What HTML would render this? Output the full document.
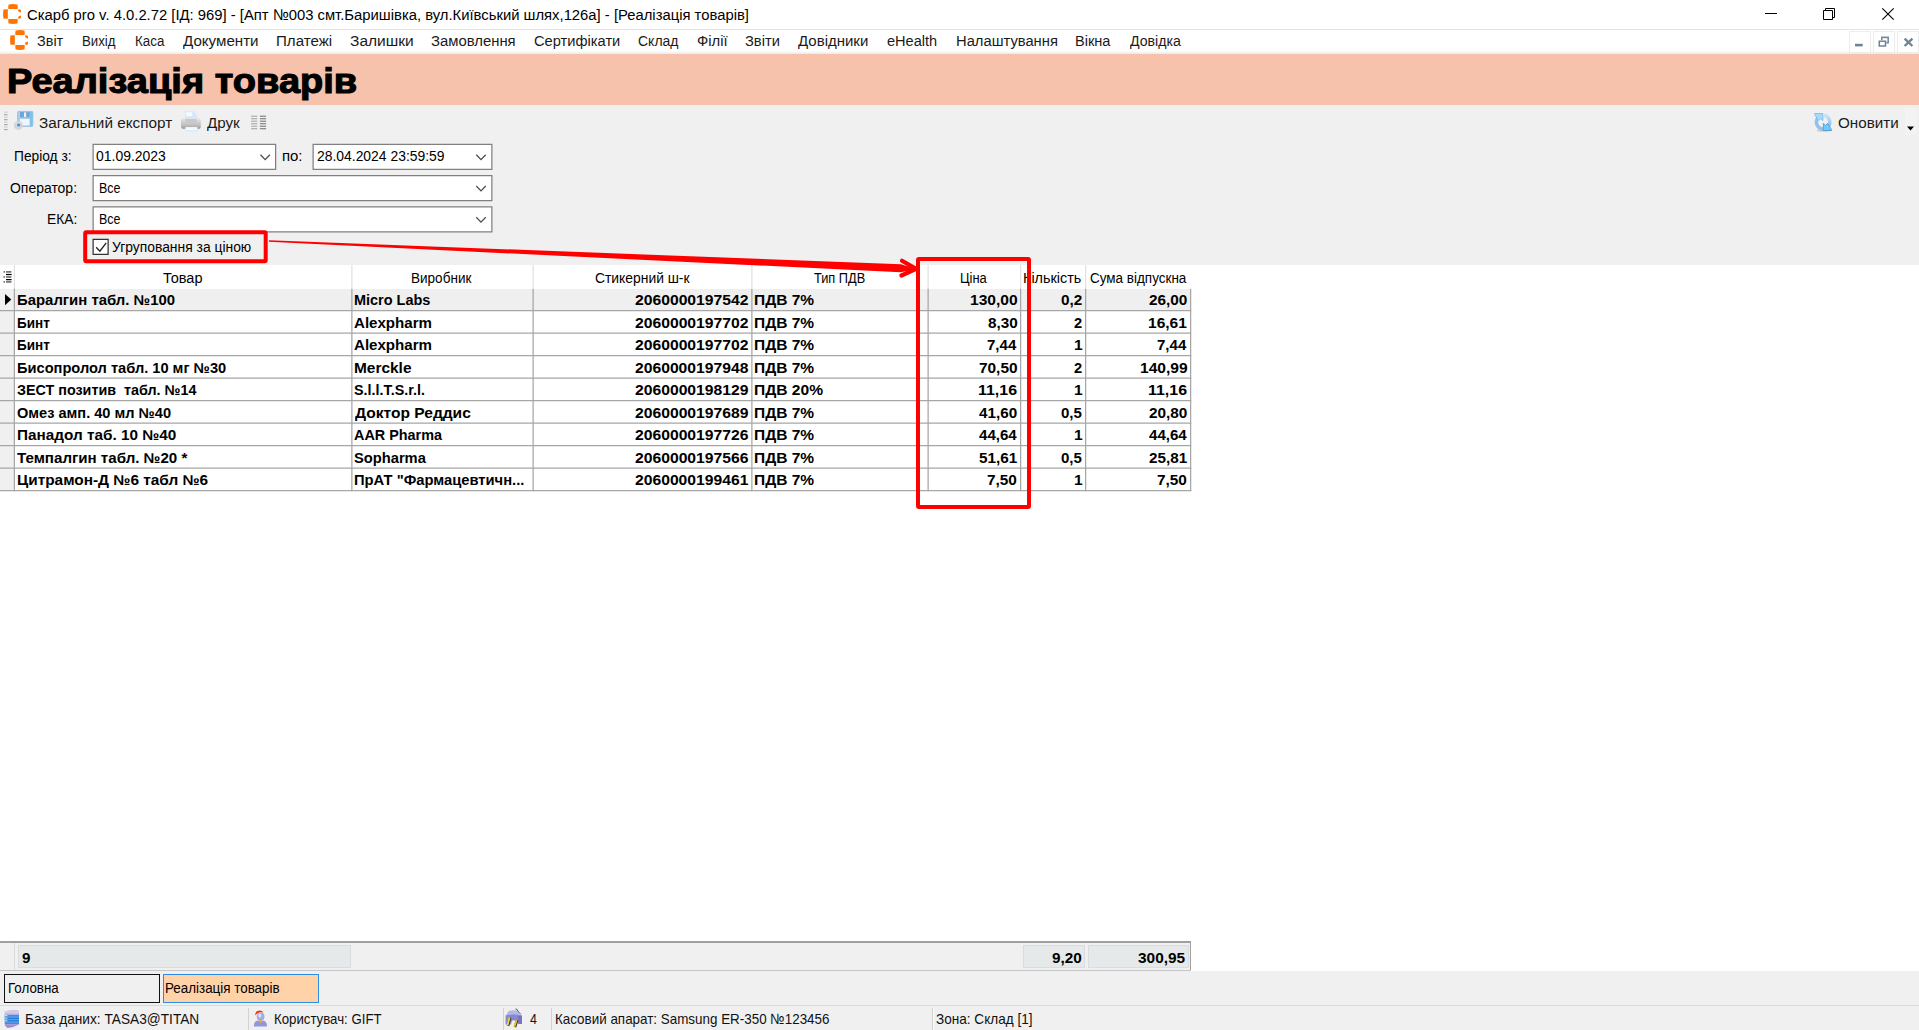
<!DOCTYPE html>
<html lang="uk"><head><meta charset="utf-8"><title>Скарб pro</title>
<style>
html,body{margin:0;padding:0;background:#fff;}
body{width:1919px;height:1030px;position:relative;overflow:hidden;font-family:'Liberation Sans',sans-serif;color:#000;}
.b{position:absolute;box-sizing:border-box;}
.t{position:absolute;white-space:pre;transform-origin:0 0;font-family:'Liberation Sans',sans-serif;}
svg{position:absolute;overflow:visible;}
</style></head><body>

<div class="b" style="left:0px;top:29px;width:1919px;height:1px;background:#e3e3e3;"></div>
<div class="b" style="left:0px;top:51px;width:1919px;height:3px;background:linear-gradient(#fff,#e9e9e9);"></div>
<div class="b" style="left:0px;top:54px;width:1919px;height:51px;background:#f6c2ac;"></div>
<div class="b" style="left:0px;top:105px;width:1919px;height:160px;background:#f0f0f0;"></div>
<svg style="left:0;top:0" width="1" height="1"><rect x="92.5" y="143.75" width="183.75" height="26.25" fill="#808080"/><rect x="93.75" y="145.0" width="181.25" height="23.75" fill="#fff"/><path d="M260.5 154.775 L265.2 159.67499999999998 L269.9 154.775" fill="none" stroke="#4a4a4a" stroke-width="1.25"/></svg>
<svg style="left:0;top:0" width="1" height="1"><rect x="312.5" y="143.75" width="180.0" height="26.25" fill="#808080"/><rect x="313.75" y="145.0" width="177.5" height="23.75" fill="#fff"/><path d="M476.3 154.775 L481 159.67499999999998 L485.7 154.775" fill="none" stroke="#4a4a4a" stroke-width="1.25"/></svg>
<svg style="left:0;top:0" width="1" height="1"><rect x="92.5" y="175" width="400.0" height="26.25" fill="#808080"/><rect x="93.75" y="176.25" width="397.5" height="23.75" fill="#fff"/><path d="M476.3 186.025 L481 190.92499999999998 L485.7 186.025" fill="none" stroke="#4a4a4a" stroke-width="1.25"/></svg>
<svg style="left:0;top:0" width="1" height="1"><rect x="92.5" y="206.25" width="400.0" height="26.25" fill="#808080"/><rect x="93.75" y="207.5" width="397.5" height="23.75" fill="#fff"/><path d="M476.3 217.275 L481 222.17499999999998 L485.7 217.275" fill="none" stroke="#4a4a4a" stroke-width="1.25"/></svg>
<svg style="left:0;top:0" width="1" height="1"><rect x="92.5" y="238.75" width="16.25" height="16.25" fill="#333"/><rect x="93.75" y="240" width="13.75" height="13.75" fill="#fff"/><path d="M96.2 247.3 L99.9 251.1 L106.2 242.8" fill="none" stroke="#222" stroke-width="1.35"/></svg>
<div class="b" style="left:0px;top:289px;width:15px;height:202px;background:#f0f0f0;"></div>
<div class="b" style="left:15px;top:289px;width:1176px;height:22px;background:#efefef;"></div>
<svg style="left:0;top:0" width="1" height="1">
<rect x="13.75" y="265" width="1.25" height="23.75" fill="#e2e2e2"/>
<rect x="351.25" y="265" width="1.25" height="23.75" fill="#e2e2e2"/>
<rect x="532.5" y="265" width="1.25" height="23.75" fill="#e2e2e2"/>
<rect x="751.25" y="265" width="1.25" height="23.75" fill="#e2e2e2"/>
<rect x="927.5" y="265" width="1.25" height="23.75" fill="#e2e2e2"/>
<rect x="1020.0" y="265" width="1.25" height="23.75" fill="#e2e2e2"/>
<rect x="1085.0" y="265" width="1.25" height="23.75" fill="#e2e2e2"/>
<rect x="0" y="310.0" width="1191.25" height="1.25" fill="#a6a6a6"/>
<rect x="0" y="332.5" width="1191.25" height="1.25" fill="#a6a6a6"/>
<rect x="0" y="355.0" width="1191.25" height="1.25" fill="#a6a6a6"/>
<rect x="0" y="377.5" width="1191.25" height="1.25" fill="#a6a6a6"/>
<rect x="0" y="400.0" width="1191.25" height="1.25" fill="#a6a6a6"/>
<rect x="0" y="422.5" width="1191.25" height="1.25" fill="#a6a6a6"/>
<rect x="0" y="445.0" width="1191.25" height="1.25" fill="#a6a6a6"/>
<rect x="0" y="467.5" width="1191.25" height="1.25" fill="#a6a6a6"/>
<rect x="0" y="490.0" width="1191.25" height="1.25" fill="#a6a6a6"/>
<rect x="13.75" y="288.75" width="1.25" height="202.5" fill="#a6a6a6"/>
<rect x="351.25" y="288.75" width="1.25" height="202.5" fill="#a6a6a6"/>
<rect x="532.5" y="288.75" width="1.25" height="202.5" fill="#a6a6a6"/>
<rect x="751.25" y="288.75" width="1.25" height="202.5" fill="#a6a6a6"/>
<rect x="927.5" y="288.75" width="1.25" height="202.5" fill="#a6a6a6"/>
<rect x="1020.0" y="288.75" width="1.25" height="202.5" fill="#a6a6a6"/>
<rect x="1085.0" y="288.75" width="1.25" height="202.5" fill="#a6a6a6"/>
<rect x="1190.0" y="288.75" width="1.25" height="202.5" fill="#a6a6a6"/>
</svg>
<svg style="left:0;top:0" width="1" height="1"><path d="M5 294 L11.3 299.6 L5 305.2 Z" fill="#000"/></svg>
<svg style="left:0;top:0" width="1" height="1">
<rect x="6" y="271.09999999999997" width="5.4" height="1.6" fill="#6a6a6a"/><rect x="3.5" y="271.2" width="1.4" height="1.4" fill="#444"/>
<rect x="6" y="273.9" width="5.6" height="1.25" fill="#000"/>
<rect x="6" y="276.2" width="5.4" height="1.6" fill="#6a6a6a"/><rect x="3.5" y="276.3" width="1.4" height="1.4" fill="#444"/>
<rect x="6" y="279.0" width="5.6" height="1.25" fill="#000"/>
<rect x="6" y="281.09999999999997" width="5.4" height="1.6" fill="#6a6a6a"/><rect x="3.5" y="281.2" width="1.4" height="1.4" fill="#444"/>
</svg>
<div class="b" style="left:0px;top:941px;width:1191px;height:2px;background:#a0a0a0;"></div>
<div class="b" style="left:0px;top:943px;width:1190px;height:27px;background:#f0f0f0;"></div>
<div class="b" style="left:1190px;top:941px;width:1px;height:30px;background:#a0a0a0;"></div>
<div class="b" style="left:0px;top:970px;width:1191px;height:1px;background:#c6c6c6;"></div>
<div class="b" style="left:14px;top:943px;width:1px;height:27px;background:#dcdcdc;"></div>
<div class="b" style="left:18px;top:945.4px;width:333px;height:22.8px;background:#e6e9ea;border:1px solid #dadddf;"></div>
<div class="b" style="left:1022.5px;top:945.4px;width:62.5px;height:22.8px;background:#e6e9ea;border:1px solid #dadddf;"></div>
<div class="b" style="left:1087.5px;top:945.4px;width:101.29999999999995px;height:22.8px;background:#e6e9ea;border:1px solid #dadddf;"></div>
<div class="b" style="left:0px;top:971px;width:1919px;height:59px;background:#f0f0f0;"></div>
<div class="b" style="left:0px;top:1005px;width:1919px;height:1px;background:#d9d9d9;"></div>
<div class="b" style="left:4px;top:974px;width:156px;height:28.5px;background:#f0f0f0;border:1.2px solid #111;"></div>
<div class="b" style="left:162.5px;top:974px;width:156.5px;height:28.5px;background:#ffd2a8;border:1.3px solid #2b8be6;"></div>
<div class="b" style="left:248px;top:1008px;width:1px;height:22px;background:#d2d2d2;"></div>
<div class="b" style="left:503px;top:1008px;width:1px;height:22px;background:#d2d2d2;"></div>
<div class="b" style="left:551px;top:1008px;width:1px;height:22px;background:#d2d2d2;"></div>
<div class="b" style="left:931.5px;top:1008px;width:1px;height:22px;background:#d2d2d2;"></div>
<div class="b" style="left:932.5px;top:1008px;width:1px;height:22px;background:#fafafa;"></div>
<svg style="left:0;top:0" width="1" height="1">
<path d="M1765 13.5 H1777" stroke="#000" stroke-width="1"/>
<path d="M1823.5 10.5 h9 v9 h-9 z M1825.5 10.5 v-2 h9 v9 h-2" fill="none" stroke="#000" stroke-width="1"/>
<path d="M1882.3 8.3 L1893.7 19.7 M1893.7 8.3 L1882.3 19.7" stroke="#000" stroke-width="1.1"/>
</svg>
<div class="b" style="left:1848.8px;top:30.8px;width:22px;height:22px;background:#fff;border:1px solid #ededed;"></div>
<div class="b" style="left:1872.8px;top:30.8px;width:22px;height:22px;background:#fff;border:1px solid #ededed;"></div>
<div class="b" style="left:1896.6px;top:30.8px;width:22px;height:22px;background:#fff;border:1px solid #ededed;"></div>
<svg style="left:0;top:0" width="1" height="1">
<rect x="1855" y="43.8" width="7.7" height="2.6" fill="#6e8297"/>
<path d="M1881.8 40 v-2.6 h6.4 v5.4 h-2" fill="none" stroke="#7a8ea3" stroke-width="1.6"/>
<rect x="1879.3" y="41.2" width="6.2" height="4.8" fill="#fff" stroke="#6e8297" stroke-width="1.5"/>
<path d="M1904.6 38.6 L1912.4 46 M1912.4 38.6 L1904.6 46" stroke="#6e8297" stroke-width="2.3"/>
</svg>
<svg style="left:2.9px;top:3.9px" width="20" height="22" viewBox="0 0 20 22">
<path d="M5.6 0.4 Q10 -0.3 14.4 0.4 Q15 2.6 14.6 5 H5.4 Q5 2.6 5.6 0.4Z" fill="#ff7400"/>
<path d="M5.6 19.6 Q10 20.3 14.4 19.6 Q15 17.4 14.6 15 H5.4 Q5 17.4 5.6 19.6Z" fill="#ff7400"/>
<path d="M0.4 5.6 Q2.4 5 4.8 5.3 V14.7 Q2.4 15 0.4 14.4 Q-0.3 10 0.4 5.6Z" fill="#ff7400"/>
<path d="M15.2 5.3 Q16.8 5.2 17.8 5.8 Q18.2 7.2 17.9 8.6 Q16.2 8.2 15.2 7.2Z" fill="#ff7400"/>
<path d="M15.2 14.7 Q16.8 14.8 17.8 14.2 Q18.2 12.8 17.9 11.4 Q16.2 11.8 15.2 12.8Z" fill="#ff7400"/>
</svg>
<svg style="left:9.6px;top:30.3px" width="20" height="22" viewBox="0 0 20 22">
<path d="M5.6 0.4 Q10 -0.3 14.4 0.4 Q15 2.6 14.6 5 H5.4 Q5 2.6 5.6 0.4Z" fill="#ff7400"/>
<path d="M5.6 19.6 Q10 20.3 14.4 19.6 Q15 17.4 14.6 15 H5.4 Q5 17.4 5.6 19.6Z" fill="#ff7400"/>
<path d="M0.4 5.6 Q2.4 5 4.8 5.3 V14.7 Q2.4 15 0.4 14.4 Q-0.3 10 0.4 5.6Z" fill="#ff7400"/>
<path d="M15.2 5.3 Q16.8 5.2 17.8 5.8 Q18.2 7.2 17.9 8.6 Q16.2 8.2 15.2 7.2Z" fill="#ff7400"/>
<path d="M15.2 14.7 Q16.8 14.8 17.8 14.2 Q18.2 12.8 17.9 11.4 Q16.2 11.8 15.2 12.8Z" fill="#ff7400"/>
</svg>
<svg style="left:0;top:0" width="1" height="1">
<rect x="4" y="111.60" width="3.6" height="1.2" fill="#cfcfcf"/>
<rect x="4" y="114.08" width="3.6" height="1.2" fill="#a8a8a8"/>
<rect x="4" y="116.56" width="3.6" height="1.2" fill="#cfcfcf"/>
<rect x="4" y="119.04" width="3.6" height="1.2" fill="#a8a8a8"/>
<rect x="4" y="121.52" width="3.6" height="1.2" fill="#cfcfcf"/>
<rect x="4" y="124.00" width="3.6" height="1.2" fill="#a8a8a8"/>
<rect x="4" y="126.48" width="3.6" height="1.2" fill="#cfcfcf"/>
<rect x="4" y="128.96" width="3.6" height="1.2" fill="#a8a8a8"/>
</svg>
<svg style="left:14px;top:110px" width="20" height="22" viewBox="0 0 20 22">
<rect x="3.6" y="1.4" width="15.2" height="15" rx="1" fill="#a9d0ea" stroke="#8fb7dd" stroke-width="0.8"/>
<rect x="15.6" y="2" width="3" height="14" fill="#7fc4e6"/>
<rect x="6" y="2" width="9.6" height="5.4" fill="#6fa6d6"/>
<rect x="10" y="2.4" width="2.2" height="4.6" fill="#f1f1f1"/>
<rect x="6" y="9" width="9.6" height="6.4" fill="#f4f4f4"/>
<circle cx="4.4" cy="15.4" r="4.5" fill="#d0d7de"/>
<circle cx="4.7" cy="15" r="1.6" fill="#4f8fc8"/>
</svg>
<svg style="left:180px;top:110px" width="22" height="22" viewBox="0 0 22 22">
<defs><linearGradient id="pg" x1="0" y1="0" x2="0" y2="1"><stop offset="0" stop-color="#e6e6e6"/><stop offset="0.75" stop-color="#b9b9b9"/><stop offset="1" stop-color="#8f8f8f"/></linearGradient></defs>
<path d="M5.2 1.2 h8 l4 4 v4 h-12z" fill="#d3e6fb"/>
<path d="M6.2 2.2 h6 v4 h-6z" fill="#f5faff"/>
<rect x="1" y="8.2" width="19.8" height="10.6" rx="2.6" fill="url(#pg)"/>
<rect x="5.4" y="9" width="11" height="4" fill="#c9c9c9"/>
<rect x="5.2" y="17.2" width="12.4" height="4.2" fill="#d7e8fb"/>
<rect x="6" y="17.2" width="10.8" height="3" fill="#f4f9ff"/>
</svg>
<svg style="left:0;top:0" width="1" height="1">
<rect x="251.1" y="115.60" width="6.2" height="1.3" fill="#b3b3b3"/>
<rect x="251.1" y="118.00" width="6.2" height="1.3" fill="#b3b3b3"/>
<rect x="251.1" y="120.60" width="6.2" height="1.3" fill="#b3b3b3"/>
<rect x="251.1" y="123.00" width="6.2" height="1.3" fill="#b3b3b3"/>
<rect x="251.1" y="125.60" width="6.2" height="1.3" fill="#b3b3b3"/>
<rect x="251.1" y="128.00" width="6.2" height="1.3" fill="#b3b3b3"/>
<rect x="259.9" y="115.60" width="6.2" height="1.3" fill="#8c8c8c"/>
<rect x="259.9" y="118.00" width="6.2" height="1.3" fill="#8c8c8c"/>
<rect x="259.9" y="120.60" width="6.2" height="1.3" fill="#8c8c8c"/>
<rect x="259.9" y="123.00" width="6.2" height="1.3" fill="#8c8c8c"/>
<rect x="259.9" y="125.60" width="6.2" height="1.3" fill="#8c8c8c"/>
<rect x="259.9" y="128.00" width="6.2" height="1.3" fill="#8c8c8c"/>
</svg>
<svg style="left:1813.5px;top:112.5px" width="19" height="19" viewBox="0 0 19 19">
<defs><linearGradient id="rg" x1="0" y1="0" x2="0" y2="1"><stop offset="0" stop-color="#cfe4f5"/><stop offset="1" stop-color="#7fbfee"/></linearGradient></defs>
<ellipse cx="9.6" cy="17.6" rx="7" ry="1.1" fill="#bdbdbd" opacity="0.75"/>
<path d="M9.2 15.8 A6.7 6.7 0 0 1 4.6 4.2" fill="none" stroke="#8fc3ee" stroke-width="3.5"/>
<path d="M0.4 0.5 H8.9 V7.6 L6.6 5.6 L4.6 7.6 L1.9 3.6Z" fill="#a6dafc" stroke="#7db8ea" stroke-width="0.8"/>
<path d="M9 2.2 A6.7 6.7 0 0 1 13.6 13.8" fill="none" stroke="url(#rg)" stroke-width="3.5"/>
<path d="M17.8 17.5 H9.3 V10.4 L11.6 12.4 L13.6 10.4 L16.3 14.4Z" fill="#6ccbfc" stroke="#4d92d2" stroke-width="0.8"/>
</svg>
<svg style="left:0;top:0" width="1" height="1"><path d="M1907 126.6 h7 l-3.5 3.8z" fill="#000"/></svg>
<div class="b" style="left:1904.5px;top:108px;width:12.5px;height:27px;background:#f3f3f3;"></div>
<svg style="left:0;top:0" width="1" height="1"><path d="M1907 126.6 h7 l-3.5 3.8z" fill="#000"/></svg>
<svg style="left:3.6px;top:1009.8px" width="16" height="19" viewBox="0 0 16 19">
<defs><linearGradient id="dbg" x1="0" y1="0" x2="0" y2="1">
<stop offset="0" stop-color="#b9b3e4"/><stop offset="0.1" stop-color="#d6d2f4"/><stop offset="0.24" stop-color="#b4b4d8"/>
<stop offset="0.27" stop-color="#3f93e6"/><stop offset="0.5" stop-color="#1f7adc"/><stop offset="0.74" stop-color="#3b86dc"/>
<stop offset="0.8" stop-color="#a49cd8"/><stop offset="1" stop-color="#8c84c4"/></linearGradient></defs>
<path d="M0.6 1.4 Q7 -0.4 14.4 0.6 L15 1.6 V14.4 Q9 17.6 3.6 18 L0.8 15.6Z" fill="url(#dbg)"/>
<path d="M0.8 7 H15 M0.8 9.6 H15 M0.8 12 H15" stroke="#9cc4f2" stroke-width="0.7" opacity="0.8"/>
<path d="M1 5.6 h2.4 M1 8.2 h2.4 M1 10.8 h2.4" stroke="#e6f0ff" stroke-width="0.9"/>
</svg>
<svg style="left:252.6px;top:1010px" width="15" height="17" viewBox="0 0 15 17">
<path d="M2.2 5.4 Q2 0.6 6.6 0.4 Q9.4 0.4 10.4 2.6 Q7 1.6 4.6 3.2 Q3.2 4.2 2.2 5.4Z" fill="#ee3010"/>
<ellipse cx="7.6" cy="6.6" rx="3.9" ry="4.2" fill="#a4a9e6"/>
<ellipse cx="6.8" cy="5.6" rx="1.6" ry="2" fill="#dfe2fa"/>
<path d="M0.8 16.6 Q0.6 11.2 5 10.6 L7.4 12.4 L9.8 10.6 Q14.2 11.2 14 16.6Z" fill="#8f96dc"/>
<path d="M5.6 10.2 L7.4 13.6 L9.2 10.2Z" fill="#e6a23a"/>
</svg>
<svg style="left:505.4px;top:1008.4px" width="18" height="20" viewBox="0 0 18 20">
<path d="M10.4 0.8 Q12.6 1.2 13 3.4 L15.6 6.4" fill="none" stroke="#6a6a78" stroke-width="1.1"/>
<path d="M0.8 7.4 L3.6 3 Q7.6 1.6 11.2 2.6 L16.8 7 V8.6 H0.8Z" fill="#b6b6e8"/>
<path d="M0.6 7.6 Q8 5.4 16.9 7.6 V16 H13.4 L11.6 12.6 H7 L6 16.4 H0.6Z" fill="#8688d4"/>
<path d="M12.8 8 H16.9 V16 H13.6Z" fill="#7476c4"/>
<path d="M5.2 9.4 L3 17.8" stroke="#3a3420" stroke-width="2.6"/>
<path d="M4.6 9.2 L2.4 17.4" stroke="#f2d23c" stroke-width="1.9"/>
<path d="M12.2 12 L10 19.2" stroke="#3a3420" stroke-width="2.6"/>
<path d="M11.6 11.8 L9.4 18.8" stroke="#f0c030" stroke-width="1.9"/>
</svg>
<span class="t" style="left:27.38px;top:7.00px;font:normal 15.5px/15.5px 'Liberation Sans',sans-serif;color:#000;transform:scaleX(0.9559)">Скарб pro v. 4.0.2.72 [ІД: 969] - [Апт №003 смт.Баришівка, вул.Київський шлях,126а] - [Реалізація товарів]</span>
<span class="t" style="left:37.37px;top:33.00px;font:normal 15.5px/15.5px 'Liberation Sans',sans-serif;color:#1a1a1a;transform:scaleX(0.9314)">Звіт</span>
<span class="t" style="left:81.87px;top:33.00px;font:normal 15.5px/15.5px 'Liberation Sans',sans-serif;color:#1a1a1a;transform:scaleX(0.8535)">Вихід</span>
<span class="t" style="left:134.56px;top:33.00px;font:normal 15.5px/15.5px 'Liberation Sans',sans-serif;color:#1a1a1a;transform:scaleX(0.8617)">Каса</span>
<span class="t" style="left:183.29px;top:33.00px;font:normal 15.5px/15.5px 'Liberation Sans',sans-serif;color:#1a1a1a;transform:scaleX(0.9762)">Документи</span>
<span class="t" style="left:276.42px;top:33.00px;font:normal 15.5px/15.5px 'Liberation Sans',sans-serif;color:#1a1a1a;transform:scaleX(0.9729)">Платежі</span>
<span class="t" style="left:349.78px;top:33.00px;font:normal 15.5px/15.5px 'Liberation Sans',sans-serif;color:#1a1a1a;transform:scaleX(1.0027)">Залишки</span>
<span class="t" style="left:431.14px;top:33.00px;font:normal 15.5px/15.5px 'Liberation Sans',sans-serif;color:#1a1a1a;transform:scaleX(0.9582)">Замовлення</span>
<span class="t" style="left:534.19px;top:33.00px;font:normal 15.5px/15.5px 'Liberation Sans',sans-serif;color:#1a1a1a;transform:scaleX(0.9462)">Сертифікати</span>
<span class="t" style="left:638.03px;top:33.00px;font:normal 15.5px/15.5px 'Liberation Sans',sans-serif;color:#1a1a1a;transform:scaleX(0.9026)">Склад</span>
<span class="t" style="left:696.63px;top:33.00px;font:normal 15.5px/15.5px 'Liberation Sans',sans-serif;color:#1a1a1a;transform:scaleX(0.9572)">Філії</span>
<span class="t" style="left:744.85px;top:33.00px;font:normal 15.5px/15.5px 'Liberation Sans',sans-serif;color:#1a1a1a;transform:scaleX(0.9472)">Звіти</span>
<span class="t" style="left:798.30px;top:33.00px;font:normal 15.5px/15.5px 'Liberation Sans',sans-serif;color:#1a1a1a;transform:scaleX(0.9674)">Довідники</span>
<span class="t" style="left:887.05px;top:33.00px;font:normal 15.5px/15.5px 'Liberation Sans',sans-serif;color:#1a1a1a;transform:scaleX(0.9390)">eHealth</span>
<span class="t" style="left:955.54px;top:33.00px;font:normal 15.5px/15.5px 'Liberation Sans',sans-serif;color:#1a1a1a;transform:scaleX(0.9510)">Налаштування</span>
<span class="t" style="left:1075.06px;top:33.00px;font:normal 15.5px/15.5px 'Liberation Sans',sans-serif;color:#1a1a1a;transform:scaleX(0.9391)">Вікна</span>
<span class="t" style="left:1129.51px;top:33.00px;font:normal 15.5px/15.5px 'Liberation Sans',sans-serif;color:#1a1a1a;transform:scaleX(0.9119)">Довідка</span>
<span class="t" style="left:6.68px;top:63.00px;font:bold 35px/35px 'Liberation Sans',sans-serif;color:#000;-webkit-text-stroke:1.1px #000;transform:scaleX(1.0864)">Реалізація товарів</span>
<span class="t" style="left:38.55px;top:115.00px;font:normal 15.5px/15.5px 'Liberation Sans',sans-serif;color:#1a1a1a;transform:scaleX(0.9874)">Загальний експорт</span>
<span class="t" style="left:206.79px;top:115.00px;font:normal 15.5px/15.5px 'Liberation Sans',sans-serif;color:#1a1a1a;transform:scaleX(0.9771)">Друк</span>
<span class="t" style="left:1837.95px;top:115.00px;font:normal 15.5px/15.5px 'Liberation Sans',sans-serif;color:#1a1a1a;transform:scaleX(0.9804)">Оновити</span>
<span class="t" style="left:14.40px;top:149.00px;font:normal 14px/14px 'Liberation Sans',sans-serif;color:#000;transform:scaleX(0.9818)">Період з:</span>
<span class="t" style="left:96.00px;top:149.00px;font:normal 14px/14px 'Liberation Sans',sans-serif;color:#000;transform:scaleX(0.9963)">01.09.2023</span>
<span class="t" style="left:281.61px;top:149.00px;font:normal 14px/14px 'Liberation Sans',sans-serif;color:#000;transform:scaleX(1.0655)">по:</span>
<span class="t" style="left:316.69px;top:149.00px;font:normal 14px/14px 'Liberation Sans',sans-serif;color:#000;transform:scaleX(0.9927)">28.04.2024 23:59:59</span>
<span class="t" style="left:10.21px;top:181.00px;font:normal 14px/14px 'Liberation Sans',sans-serif;color:#000;transform:scaleX(0.9965)">Оператор:</span>
<span class="t" style="left:99.09px;top:181.00px;font:normal 14px/14px 'Liberation Sans',sans-serif;color:#000;transform:scaleX(0.8908)">Все</span>
<span class="t" style="left:46.77px;top:212.00px;font:normal 14px/14px 'Liberation Sans',sans-serif;color:#000;transform:scaleX(0.9860)">ЕКА:</span>
<span class="t" style="left:99.09px;top:212.00px;font:normal 14px/14px 'Liberation Sans',sans-serif;color:#000;transform:scaleX(0.8908)">Все</span>
<span class="t" style="left:112.34px;top:240.00px;font:normal 14px/14px 'Liberation Sans',sans-serif;color:#000;transform:scaleX(0.9903)">Угруповання за ціною</span>
<span class="t" style="left:163.03px;top:271.00px;font:normal 14px/14px 'Liberation Sans',sans-serif;color:#000;transform:scaleX(1.0370)">Товар</span>
<span class="t" style="left:411.29px;top:271.00px;font:normal 14px/14px 'Liberation Sans',sans-serif;color:#000;transform:scaleX(0.9670)">Виробник</span>
<span class="t" style="left:594.66px;top:271.00px;font:normal 14px/14px 'Liberation Sans',sans-serif;color:#000;transform:scaleX(0.9903)">Стикерний ш-к</span>
<span class="t" style="left:814.47px;top:271.00px;font:normal 14px/14px 'Liberation Sans',sans-serif;color:#000;transform:scaleX(0.9121)">Тип ПДВ</span>
<span class="t" style="left:960.45px;top:271.00px;font:normal 14px/14px 'Liberation Sans',sans-serif;color:#000;transform:scaleX(0.9227)">Ціна</span>
<span class="t" style="left:1023.12px;top:271.00px;font:normal 14px/14px 'Liberation Sans',sans-serif;color:#000;transform:scaleX(1.0282)">Кількість</span>
<span class="t" style="left:1089.68px;top:271.00px;font:normal 14px/14px 'Liberation Sans',sans-serif;color:#000;transform:scaleX(0.9628)">Сума відпускна</span>
<span class="t" style="left:16.54px;top:293.00px;font:bold 14px/14px 'Liberation Sans',sans-serif;color:#000;transform:scaleX(1.0646)">Баралгин табл. №100</span>
<span class="t" style="left:353.87px;top:293.00px;font:bold 14px/14px 'Liberation Sans',sans-serif;color:#000;transform:scaleX(1.0328)">Micro Labs</span>
<span class="t" style="left:635.13px;top:293.00px;font:bold 14px/14px 'Liberation Sans',sans-serif;color:#000;transform:scaleX(1.1211)">2060000197542</span>
<span class="t" style="left:754.29px;top:293.00px;font:bold 14px/14px 'Liberation Sans',sans-serif;color:#000;transform:scaleX(1.1060)">ПДВ 7%</span>
<span class="t" style="left:969.70px;top:293.00px;font:bold 14px/14px 'Liberation Sans',sans-serif;color:#000;transform:scaleX(1.1130)">130,00</span>
<span class="t" style="left:1061.31px;top:293.00px;font:bold 14px/14px 'Liberation Sans',sans-serif;color:#000;transform:scaleX(1.0943)">0,2</span>
<span class="t" style="left:1148.87px;top:293.00px;font:bold 14px/14px 'Liberation Sans',sans-serif;color:#000;transform:scaleX(1.0956)">26,00</span>
<span class="t" style="left:16.65px;top:316.00px;font:bold 14px/14px 'Liberation Sans',sans-serif;color:#000;transform:scaleX(0.9672)">Бинт</span>
<span class="t" style="left:354.39px;top:316.00px;font:bold 14px/14px 'Liberation Sans',sans-serif;color:#000;transform:scaleX(1.0777)">Alexpharm</span>
<span class="t" style="left:635.13px;top:316.00px;font:bold 14px/14px 'Liberation Sans',sans-serif;color:#000;transform:scaleX(1.1211)">2060000197702</span>
<span class="t" style="left:754.29px;top:316.00px;font:bold 14px/14px 'Liberation Sans',sans-serif;color:#000;transform:scaleX(1.1060)">ПДВ 7%</span>
<span class="t" style="left:987.59px;top:316.00px;font:bold 14px/14px 'Liberation Sans',sans-serif;color:#000;transform:scaleX(1.0921)">8,30</span>
<span class="t" style="left:1074.35px;top:316.00px;font:bold 14px/14px 'Liberation Sans',sans-serif;color:#000;transform:scaleX(1.0428)">2</span>
<span class="t" style="left:1148.22px;top:316.00px;font:bold 14px/14px 'Liberation Sans',sans-serif;color:#000;transform:scaleX(1.1090)">16,61</span>
<span class="t" style="left:16.65px;top:338.00px;font:bold 14px/14px 'Liberation Sans',sans-serif;color:#000;transform:scaleX(0.9672)">Бинт</span>
<span class="t" style="left:354.39px;top:338.00px;font:bold 14px/14px 'Liberation Sans',sans-serif;color:#000;transform:scaleX(1.0777)">Alexpharm</span>
<span class="t" style="left:635.13px;top:338.00px;font:bold 14px/14px 'Liberation Sans',sans-serif;color:#000;transform:scaleX(1.1211)">2060000197702</span>
<span class="t" style="left:754.29px;top:338.00px;font:bold 14px/14px 'Liberation Sans',sans-serif;color:#000;transform:scaleX(1.1060)">ПДВ 7%</span>
<span class="t" style="left:987.46px;top:338.00px;font:bold 14px/14px 'Liberation Sans',sans-serif;color:#000;transform:scaleX(1.0733)">7,44</span>
<span class="t" style="left:1073.67px;top:338.00px;font:bold 14px/14px 'Liberation Sans',sans-serif;color:#000;transform:scaleX(1.1139)">1</span>
<span class="t" style="left:1157.36px;top:338.00px;font:bold 14px/14px 'Liberation Sans',sans-serif;color:#000;transform:scaleX(1.0733)">7,44</span>
<span class="t" style="left:16.56px;top:361.00px;font:bold 14px/14px 'Liberation Sans',sans-serif;color:#000;transform:scaleX(1.0445)">Бисопролол табл. 10 мг №30</span>
<span class="t" style="left:353.80px;top:361.00px;font:bold 14px/14px 'Liberation Sans',sans-serif;color:#000;transform:scaleX(1.1026)">Merckle</span>
<span class="t" style="left:635.13px;top:361.00px;font:bold 14px/14px 'Liberation Sans',sans-serif;color:#000;transform:scaleX(1.1204)">2060000197948</span>
<span class="t" style="left:754.29px;top:361.00px;font:bold 14px/14px 'Liberation Sans',sans-serif;color:#000;transform:scaleX(1.1060)">ПДВ 7%</span>
<span class="t" style="left:978.83px;top:361.00px;font:bold 14px/14px 'Liberation Sans',sans-serif;color:#000;transform:scaleX(1.0996)">70,50</span>
<span class="t" style="left:1074.35px;top:361.00px;font:bold 14px/14px 'Liberation Sans',sans-serif;color:#000;transform:scaleX(1.0428)">2</span>
<span class="t" style="left:1139.60px;top:361.00px;font:bold 14px/14px 'Liberation Sans',sans-serif;color:#000;transform:scaleX(1.1120)">140,99</span>
<span class="t" style="left:17.12px;top:383.00px;font:bold 14px/14px 'Liberation Sans',sans-serif;color:#000;transform:scaleX(1.0237)">ЗЕСТ позитив  табл. №14</span>
<span class="t" style="left:354.32px;top:383.00px;font:bold 14px/14px 'Liberation Sans',sans-serif;color:#000;transform:scaleX(1.0246)">S.l.l.T.S.r.l.</span>
<span class="t" style="left:635.13px;top:383.00px;font:bold 14px/14px 'Liberation Sans',sans-serif;color:#000;transform:scaleX(1.1209)">2060000198129</span>
<span class="t" style="left:754.29px;top:383.00px;font:bold 14px/14px 'Liberation Sans',sans-serif;color:#000;transform:scaleX(1.1120)">ПДВ 20%</span>
<span class="t" style="left:978.29px;top:383.00px;font:bold 14px/14px 'Liberation Sans',sans-serif;color:#000;transform:scaleX(1.1401)">11,16</span>
<span class="t" style="left:1073.67px;top:383.00px;font:bold 14px/14px 'Liberation Sans',sans-serif;color:#000;transform:scaleX(1.1139)">1</span>
<span class="t" style="left:1148.19px;top:383.00px;font:bold 14px/14px 'Liberation Sans',sans-serif;color:#000;transform:scaleX(1.1401)">11,16</span>
<span class="t" style="left:17.04px;top:406.00px;font:bold 14px/14px 'Liberation Sans',sans-serif;color:#000;transform:scaleX(1.0401)">Омез амп. 40 мл №40</span>
<span class="t" style="left:354.76px;top:406.00px;font:bold 14px/14px 'Liberation Sans',sans-serif;color:#000;transform:scaleX(1.1104)">Доктор Реддис</span>
<span class="t" style="left:635.13px;top:406.00px;font:bold 14px/14px 'Liberation Sans',sans-serif;color:#000;transform:scaleX(1.1209)">2060000197689</span>
<span class="t" style="left:754.29px;top:406.00px;font:bold 14px/14px 'Liberation Sans',sans-serif;color:#000;transform:scaleX(1.1060)">ПДВ 7%</span>
<span class="t" style="left:979.21px;top:406.00px;font:bold 14px/14px 'Liberation Sans',sans-serif;color:#000;transform:scaleX(1.0886)">41,60</span>
<span class="t" style="left:1061.32px;top:406.00px;font:bold 14px/14px 'Liberation Sans',sans-serif;color:#000;transform:scaleX(1.0745)">0,5</span>
<span class="t" style="left:1148.87px;top:406.00px;font:bold 14px/14px 'Liberation Sans',sans-serif;color:#000;transform:scaleX(1.0956)">20,80</span>
<span class="t" style="left:16.51px;top:428.00px;font:bold 14px/14px 'Liberation Sans',sans-serif;color:#000;transform:scaleX(1.0934)">Панадол таб. 10 №40</span>
<span class="t" style="left:354.42px;top:428.00px;font:bold 14px/14px 'Liberation Sans',sans-serif;color:#000;transform:scaleX(1.0278)">AAR Pharma</span>
<span class="t" style="left:635.13px;top:428.00px;font:bold 14px/14px 'Liberation Sans',sans-serif;color:#000;transform:scaleX(1.1209)">2060000197726</span>
<span class="t" style="left:754.29px;top:428.00px;font:bold 14px/14px 'Liberation Sans',sans-serif;color:#000;transform:scaleX(1.1060)">ПДВ 7%</span>
<span class="t" style="left:979.21px;top:428.00px;font:bold 14px/14px 'Liberation Sans',sans-serif;color:#000;transform:scaleX(1.0767)">44,64</span>
<span class="t" style="left:1073.67px;top:428.00px;font:bold 14px/14px 'Liberation Sans',sans-serif;color:#000;transform:scaleX(1.1139)">1</span>
<span class="t" style="left:1149.11px;top:428.00px;font:bold 14px/14px 'Liberation Sans',sans-serif;color:#000;transform:scaleX(1.0767)">44,64</span>
<span class="t" style="left:17.43px;top:451.00px;font:bold 14px/14px 'Liberation Sans',sans-serif;color:#000;transform:scaleX(1.0790)">Темпалгин табл. №20 *</span>
<span class="t" style="left:354.31px;top:451.00px;font:bold 14px/14px 'Liberation Sans',sans-serif;color:#000;transform:scaleX(1.0494)">Sopharma</span>
<span class="t" style="left:635.13px;top:451.00px;font:bold 14px/14px 'Liberation Sans',sans-serif;color:#000;transform:scaleX(1.1209)">2060000197566</span>
<span class="t" style="left:754.29px;top:451.00px;font:bold 14px/14px 'Liberation Sans',sans-serif;color:#000;transform:scaleX(1.1060)">ПДВ 7%</span>
<span class="t" style="left:978.80px;top:451.00px;font:bold 14px/14px 'Liberation Sans',sans-serif;color:#000;transform:scaleX(1.0952)">51,61</span>
<span class="t" style="left:1061.32px;top:451.00px;font:bold 14px/14px 'Liberation Sans',sans-serif;color:#000;transform:scaleX(1.0745)">0,5</span>
<span class="t" style="left:1148.87px;top:451.00px;font:bold 14px/14px 'Liberation Sans',sans-serif;color:#000;transform:scaleX(1.0903)">25,81</span>
<span class="t" style="left:16.50px;top:473.00px;font:bold 14px/14px 'Liberation Sans',sans-serif;color:#000;transform:scaleX(1.0975)">Цитрамон-Д №6 табл №6</span>
<span class="t" style="left:353.85px;top:473.00px;font:bold 14px/14px 'Liberation Sans',sans-serif;color:#000;transform:scaleX(1.0537)">ПрАТ &quot;Фармацевтичн...</span>
<span class="t" style="left:635.13px;top:473.00px;font:bold 14px/14px 'Liberation Sans',sans-serif;color:#000;transform:scaleX(1.1200)">2060000199461</span>
<span class="t" style="left:754.29px;top:473.00px;font:bold 14px/14px 'Liberation Sans',sans-serif;color:#000;transform:scaleX(1.1060)">ПДВ 7%</span>
<span class="t" style="left:987.45px;top:473.00px;font:bold 14px/14px 'Liberation Sans',sans-serif;color:#000;transform:scaleX(1.0973)">7,50</span>
<span class="t" style="left:1073.67px;top:473.00px;font:bold 14px/14px 'Liberation Sans',sans-serif;color:#000;transform:scaleX(1.1139)">1</span>
<span class="t" style="left:1157.35px;top:473.00px;font:bold 14px/14px 'Liberation Sans',sans-serif;color:#000;transform:scaleX(1.0973)">7,50</span>
<span class="t" style="left:21.63px;top:951.00px;font:bold 14px/14px 'Liberation Sans',sans-serif;color:#000;transform:scaleX(1.0828)">9</span>
<span class="t" style="left:1051.62px;top:951.00px;font:bold 14px/14px 'Liberation Sans',sans-serif;color:#000;transform:scaleX(1.0926)">9,20</span>
<span class="t" style="left:1137.62px;top:951.00px;font:bold 14px/14px 'Liberation Sans',sans-serif;color:#000;transform:scaleX(1.1009)">300,95</span>
<span class="t" style="left:7.56px;top:981.00px;font:normal 14px/14px 'Liberation Sans',sans-serif;color:#000;transform:scaleX(0.9523)">Головна</span>
<span class="t" style="left:165.41px;top:981.00px;font:normal 14px/14px 'Liberation Sans',sans-serif;color:#000;transform:scaleX(0.9565)">Реалізація товарів</span>
<span class="t" style="left:25.41px;top:1011.00px;font:normal 15px/15px 'Liberation Sans',sans-serif;color:#111;transform:scaleX(0.9131)">База даних: TASA3@TITAN</span>
<span class="t" style="left:274.26px;top:1011.00px;font:normal 15px/15px 'Liberation Sans',sans-serif;color:#111;transform:scaleX(0.8817)">Користувач: GIFT</span>
<span class="t" style="left:529.88px;top:1011.00px;font:normal 15px/15px 'Liberation Sans',sans-serif;color:#111;transform:scaleX(0.8273)">4</span>
<span class="t" style="left:555.44px;top:1011.00px;font:normal 15px/15px 'Liberation Sans',sans-serif;color:#111;transform:scaleX(0.8939)">Касовий апарат: Samsung ER-350 №123456</span>
<span class="t" style="left:935.91px;top:1011.00px;font:normal 15px/15px 'Liberation Sans',sans-serif;color:#111;transform:scaleX(0.9056)">Зона: Склад [1]</span>
<svg style="left:0;top:0" width="1" height="1">
<rect x="85.2" y="232.2" width="180.5" height="29" rx="1" fill="none" stroke="#ff0000" stroke-width="4"/>
<rect x="918" y="259" width="111" height="248" rx="1" fill="none" stroke="#ff0000" stroke-width="4"/>
<polygon points="268.97,241.70 900.63,272.35 917.00,269.00 900.97,264.25 269.03,240.30" fill="#ff0000"/>
<path d="M902 260.8 L916.2 268.9 L901.4 275.5" fill="none" stroke="#ff0000" stroke-width="4.2" stroke-linecap="round" stroke-linejoin="round"/>
</svg>
</body></html>
